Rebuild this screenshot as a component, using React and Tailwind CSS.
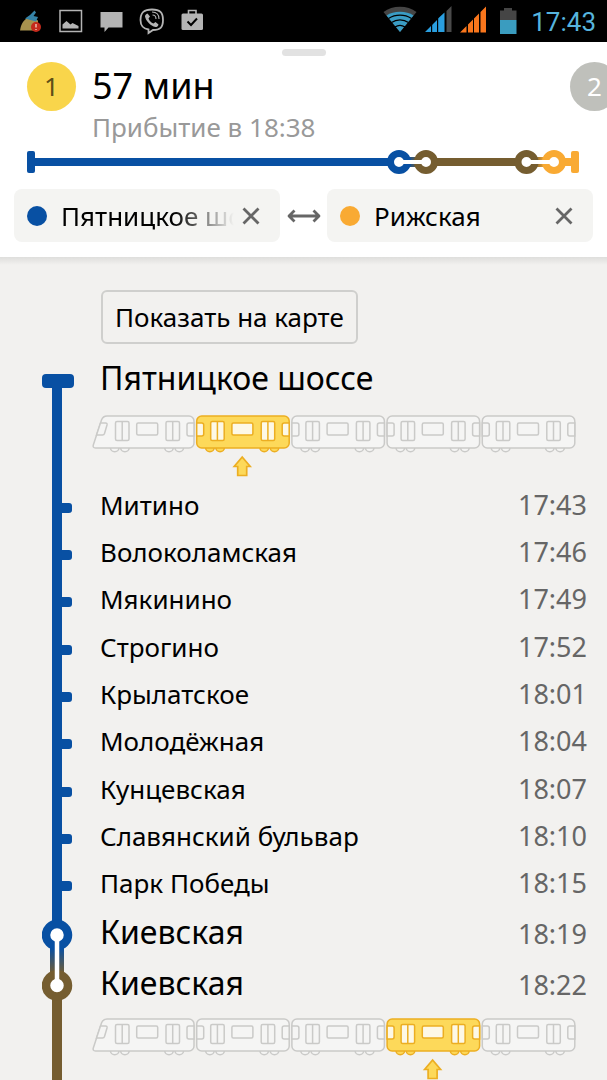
import clsx from "clsx";

const BLUE = "#0850a3";
const BROWN = "#755d30";
const ORANGE = "#f9aa33";

const STATIONS = [
  { name: "Митино", time: "17:43" },
  { name: "Волоколамская", time: "17:46" },
  { name: "Мякинино", time: "17:49" },
  { name: "Строгино", time: "17:52" },
  { name: "Крылатское", time: "18:01" },
  { name: "Молодёжная", time: "18:04" },
  { name: "Кунцевская", time: "18:07" },
  { name: "Славянский бульвар", time: "18:10" },
  { name: "Парк Победы", time: "18:15" },
];

const TRANSFERS = [
  { name: "Киевская", time: "18:19" },
  { name: "Киевская", time: "18:22" },
];

const StatusBar = () => (
  <div className="flex h-[42px] shrink-0 items-center justify-between bg-black pr-[11px] pl-5">
    <svg width="184" height="42" viewBox="20 0 184 42" fill="none">
      {/* cleaner */}
      <path d="M20 30.500c1-7 4-11 9-13.500l9 3.500c0 4-1 7-2 10z" fill="#a8924e" />
      <path d="M25 18.500l5-3.500 4.500-4.500 1.500 2-2.500 3.500 4.500 1-2 4.500z" fill="#3583a8" />
      <circle cx="36" cy="27" r="5" fill="#c42a1c" />
      <path d="M36 24v3.500M36 29v1" stroke="#f0c0b0" strokeWidth="1.500" />
      {/* picture */}
      <rect x="60" y="10.500" width="21.500" height="21" stroke="#b4b4b4" strokeWidth="1.500" />
      <path d="M62.500 28.500v-4l4-3.500 4 3.500 2-1.500 6 3v2.500z" fill="#b4b4b4" />
      {/* message */}
      <path d="M100.500 12H122.500v15.500H108.500L104.500 32v-4.500h-4z" fill="#b4b4b4" />
      {/* viber */}
      <path
        d="M152 9.500c8 0 11 3 11 10.500s-3 10-10 10l-4.500 3v-3.500c-5-1-8-3-8-9.500 0-7.500 3.500-10.500 11.500-10.500z"
        stroke="#b4b4b4"
        strokeWidth="1.800"
      />
      <path
        d="M147.500 13.500l2.500 3-1.500 2c1 2.500 2.500 4 5 5l2-1.500 3 2.500c-.5 2-1.500 2.500-3 2.500-5-1-9.500-6-10.500-10.500 0-1.500 1-2.500 2.500-3z"
        fill="#b4b4b4"
      />
      <path d="M152 12c4.500 0 7 2.500 7 7M152.500 15c2.500 0 3.500 1.500 3.500 4" stroke="#b4b4b4" strokeWidth="1.100" />
      {/* work */}
      <path d="M188.500 14v-3.500h7.500V14" stroke="#b4b4b4" strokeWidth="1.600" />
      <rect x="181.500" y="13.500" width="21.500" height="16.500" rx="1.500" fill="#b4b4b4" />
      <path d="M187.500 21.500l3.500 3.500 6-6.500" stroke="#000" strokeWidth="2" />
    </svg>
    <div className="flex items-center gap-[13px]">
      <svg width="135" height="42" viewBox="384 0 135 42" fill="none">
        <path d="M401 32L384.500 12c9-7 24-7 33 0z" fill="#454545" />
        <path d="M401 32L387.500 15.500c7-5 20-5 27 0z" fill="#3a9cc4" />
        <path
          d="M389.500 18.500c7-4.500 16-4.500 23 0M392.500 22.500c5-3.500 12-3.500 17 0M396 27c3-2 7-2 10 0"
          stroke="#000"
          strokeWidth="1.300"
        />
        <path d="M426 32l6-6v6zM433 25l5-5v12h-5zM439 18.500l6.500-6V32h-6.500z" fill="#2a9fe0" />
        <path d="M447.500 11l5-5V32h-5z" fill="#4a4a4a" />
        <path d="M432.700 14V32M438.700 14V32" stroke="#000" />
        <path d="M461 32.500l6.500-6.500v6.500zM469 24.500l5-5v13h-5zM475 18.500l5-5v19h-5zM481.500 12l5.500-5.500v26h-5.500z" fill="#f9761c" />
        <path d="M501 10.500h4V8h8v2.500h4.500V20H501z" fill="#454545" />
        <rect x="501" y="20" width="16.500" height="14" fill="#3a9cbf" />
      </svg>
      <span className="pt-0.5 font-['Roboto',sans-serif] text-[26px] leading-10 text-[#56b4de]">17:43</span>
    </div>
  </div>
);

const RouteBar = () => (
  <svg className="block w-full" viewBox="0 0 552 26" fill="none">
    <defs>
      <linearGradient id="blue-brown" x1="380" x2="392" gradientUnits="userSpaceOnUse">
        <stop stopColor={BLUE} />
        <stop offset="1" stopColor={BROWN} />
      </linearGradient>
      <linearGradient id="brown-orange" x1="507" x2="518" gradientUnits="userSpaceOnUse">
        <stop stopColor={BROWN} />
        <stop offset="1" stopColor={ORANGE} />
      </linearGradient>
    </defs>
    <rect y="2" width="8" height="22" rx="2" fill={BLUE} />
    <path d="M6 13h360" stroke={BLUE} strokeWidth="8" />
    <path d="M404 13h90" stroke={BROWN} strokeWidth="8" />
    <path d="M530 13h16" stroke={ORANGE} strokeWidth="8" />
    <rect x="544" y="2" width="8" height="22" rx="2" fill={ORANGE} />
    <rect x="378" y="8" width="16" height="10" fill="url(#blue-brown)" />
    <rect x="505" y="8" width="16" height="10" fill="url(#brown-orange)" />
    <circle cx="372" cy="13" r="8.500" stroke={BLUE} strokeWidth="7" fill="#fff" />
    <circle cx="399" cy="13" r="8.500" stroke={BROWN} strokeWidth="7" fill="#fff" />
    <circle cx="499.500" cy="13" r="8.500" stroke={BROWN} strokeWidth="7" fill="#fff" />
    <circle cx="527" cy="13" r="8.500" stroke={ORANGE} strokeWidth="7" fill="#fff" />
    <path d="M372 13h27M500 13h27" stroke="#fff" strokeWidth="4" />
  </svg>
);

const StationField = ({ id, label, value, dotClass, faded }) => (
  <div className="flex h-[53px] min-w-0 flex-1 items-center rounded-lg bg-[#f4f4f2] pr-5 pl-[13px]">
    <label htmlFor={id} aria-label={label} className={clsx("size-5 shrink-0 rounded-full", dotClass)} />
    <input
      id={id}
      type="text"
      defaultValue={value}
      className={clsx(
        "mr-2 ml-3.5 w-0 min-w-0 flex-1 bg-transparent text-[26px] leading-8 text-black outline-none",
        faded && "[mask-image:linear-gradient(to_right,black_65%,transparent_100%)]"
      )}
    />
    <button type="button" aria-label="Очистить" className="shrink-0">
      <svg className="block" width="18" height="18" viewBox="0 0 18 18" stroke="#666" strokeWidth="2.800">
        <path d="M1.500 1.500l15 15M16.500 1.500l-15 15" />
      </svg>
    </button>
  </div>
);

const Header = () => (
  <header className="shrink-0 overflow-hidden bg-white pt-[7px] pb-[15px]">
    <div className="mx-auto h-[7px] w-11 rounded bg-[#e2e2e2]" />
    <div className="mt-1.5 flex items-start pl-[27px]">
      <button type="button" className="size-[49px] shrink-0 rounded-full bg-[#f9d54b] text-[26px] text-[#5e4f17]">
        1
      </button>
      <div className="ml-4 flex-1">
        <h1 className="text-[36px] leading-[48px] text-black">57 мин</h1>
        <p className="text-[26px] leading-[34px] text-[#999]">Прибытие в 18:38</p>
      </div>
      <button type="button" className="-mr-3 size-[49px] shrink-0 rounded-full bg-[#bfc0bb] text-[26px] text-white">
        2
      </button>
    </div>
    <div className="mt-[5px] pr-7 pl-[27px]">
      <RouteBar />
    </div>
    <form className="mt-3.5 flex items-center px-3.5" onSubmit={(e) => e.preventDefault()}>
      <StationField id="from" label="Откуда" value="Пятницкое шоссе" dotClass="bg-[#0850a3]" faded />
      <button type="button" aria-label="Поменять местами" className="flex w-[47px] shrink-0 justify-center">
        <svg width="34" height="14" viewBox="0 0 34 14" fill="none" stroke="#666" strokeWidth="2.800">
          <path d="M2 7h30M7.500 1.500L2 7l5.500 5.500M26.500 1.500L32 7l-5.500 5.500" strokeLinejoin="round" />
        </svg>
      </button>
      <StationField id="to" label="Куда" value="Рижская" dotClass="bg-[#f9aa33]" />
    </form>
  </header>
);

const Car = ({ x, first, active }) => {
  const fill = active ? "#fdd95a" : "#f5f5f4";
  const glass = active ? "#fdf8e6" : "#f5f5f4";
  return (
    <g transform={`translate(${x} 0)`} stroke={active ? "#ecae22" : "#cacac8"} strokeWidth="1.500" fill={glass}>
      {[13.7, 23.900, 68, 78.300].map((cx) => (
        <circle key={cx} cx={cx} cy="32.500" r="4.300" fill={fill} />
      ))}
      {first ? (
        <path d="M6 1H88a5 5 0 0 1 5 5V28a5 5 0 0 1-5 5H-5.500c-2 0-2.800-1.200-2.200-3L.5 5Q2 1 6 1z" fill={fill} />
      ) : (
        <rect x="0.500" y="1" width="92.500" height="32" rx="5" fill={fill} />
      )}
      {first ? (
        <path d="M-.5 8H4.500q2 0 1.500 2L3.500 18.500q-.5 1.500-2 1.500H-4.500z" />
      ) : (
        <path d="M.5 8H5.500q2 0 2 2V19q0 2-2 2H.5z" />
      )}
      <rect x="14.500" y="6.500" width="13.500" height="19" rx="1.500" />
      <path d="M21.200 6.500v19" />
      <rect x="35.700" y="8" width="21" height="12" rx="1.500" />
      <rect x="65" y="6.500" width="13.500" height="19" rx="1.500" />
      <path d="M71.700 6.500v19" />
      <path d="M93 8H88q-2 0-2 2V19q0 2 2 2H93z" />
    </g>
  );
};

const Train = ({ activeCar }) => {
  const offset = (i) => 9 + i * 95.200;
  return (
    <svg className="block h-auto w-[484px] max-w-full" viewBox="0 0 484 62" role="img" aria-label="Вагон для посадки">
      {[0, 1, 2, 3, 4].map((i) => (
        <Car key={i} x={offset(i)} first={i === 0} active={i === activeCar} />
      ))}
      <path
        transform={`translate(${offset(activeCar) + 46} 41)`}
        d="M0 1L8 10.500H4.500V19.500H-4.500V10.500H-8z"
        fill="#fdd95a"
        stroke="#ecae22"
        strokeWidth="1.700"
      />
    </svg>
  );
};

const StationRow = ({ name, time }) => (
  <li className="flex items-center">
    <div className="flex w-[58px] shrink-0 items-center self-stretch">
      <div className="ml-2.5 w-2.5 self-stretch bg-[#0850a3]" />
      <div className="mt-1 h-2.5 w-2.5 rounded-r-[3px] bg-[#0850a3]" />
    </div>
    <span className="flex-1 pb-0.5 text-[26px] leading-9 text-black">{name}</span>
    <time className="pb-0.5 text-[27px] leading-9 text-[#666]">{time}</time>
  </li>
);

const TransferRail = () => (
  <svg className="block w-8 shrink-0" width="32" height="104" viewBox="0 0 32 104" fill="none">
    <defs>
      <linearGradient id="rail-transfer" x1="0" y1="40" x2="0" y2="66" gradientUnits="userSpaceOnUse">
        <stop stopColor={BLUE} />
        <stop offset="1" stopColor={BROWN} />
      </linearGradient>
    </defs>
    <path d="M15 0v20" stroke={BLUE} strokeWidth="10" />
    <path d="M15 86v18" stroke={BROWN} strokeWidth="10" />
    <rect x="8" y="36" width="14" height="34" fill="url(#rail-transfer)" />
    <circle cx="15" cy="27" r="11" stroke={BLUE} strokeWidth="8.500" fill="#fff" />
    <circle cx="15" cy="77.500" r="11" stroke={BROWN} strokeWidth="8.500" fill="#fff" />
    <path d="M15 28v50" stroke="#fff" strokeWidth="4.500" />
  </svg>
);

const RouteDetails = () => (
  <main className="min-h-0 flex-1 overflow-y-auto bg-[#f2f1ef] [scrollbar-width:none]">
    <div className="h-2 bg-linear-to-b from-[#dededc] to-[#f2f1ef]" />
    <div className="pt-[25px] pr-5 pl-[42px]">
      <button
        type="button"
        className="ml-[59px] block h-[54px] rounded-md border-2 border-[#cfcfcd] px-3 text-[26px] leading-8 text-black"
      >
        Показать на карте
      </button>

      <section className="mt-[11px] flex">
        <div className="flex w-[50px] shrink-0 flex-col pt-[19px]">
          <div className="h-3.5 w-8 rounded bg-[#0850a3]" />
          <div className="ml-2.5 w-2.5 flex-1 bg-[#0850a3]" />
        </div>
        <div className="min-w-0 flex-1 pb-[5px]">
          <h2 className="mb-3.5 pl-2 text-[32px] leading-[46px] text-black">Пятницкое шоссе</h2>
          <Train activeCar={1} />
        </div>
      </section>

      <ul className="grid min-h-[426px] auto-rows-fr">
        {STATIONS.map((station) => (
          <StationRow key={station.name} {...station} />
        ))}
      </ul>

      <section className="flex">
        <TransferRail />
        <ul className="ml-[26px] flex-1">
          {TRANSFERS.map((station) => (
            <li key={station.time} className="flex h-[51px] items-center">
              <span className="flex-1 pb-1 text-[32px] leading-[46px] text-black">{station.name}</span>
              <time className="text-[27px] leading-9 text-[#666]">{station.time}</time>
            </li>
          ))}
        </ul>
      </section>

      <section className="flex">
        <div className="ml-2.5 w-2.5 shrink-0 bg-[#755d30]" />
        <div className="ml-[30px] min-w-0 flex-1 pt-1.5 pb-6">
          <Train activeCar={3} />
        </div>
      </section>
    </div>
  </main>
);

export default function App() {
  return (
    <div className="flex h-screen flex-col overflow-hidden bg-white font-['Noto_Sans','Open_Sans',sans-serif]">
      <StatusBar />
      <Header />
      <RouteDetails />
    </div>
  );
}
